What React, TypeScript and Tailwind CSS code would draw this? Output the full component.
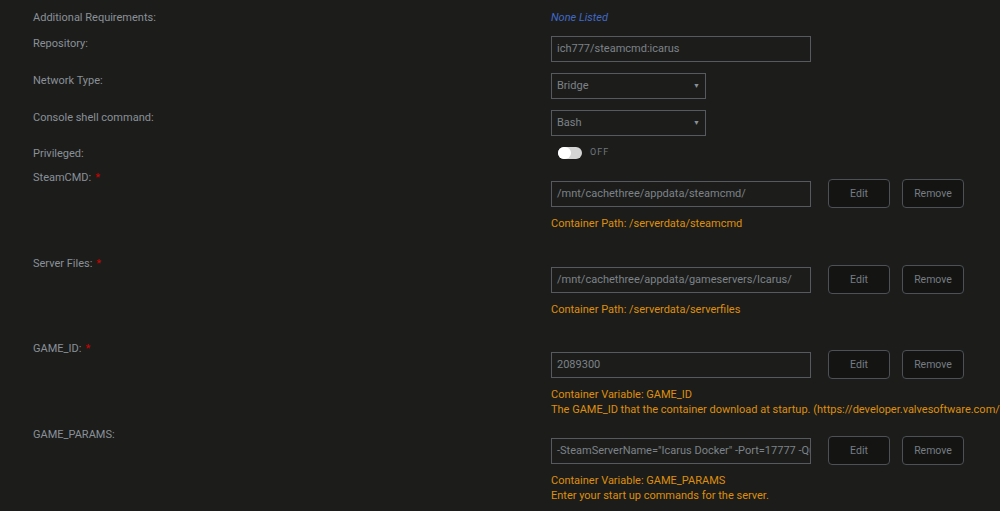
import { ReactNode } from "react"

const font = { fontFamily: "Roboto, 'Liberation Sans', sans-serif" }

function Label({ children, required }: { children: ReactNode; required?: boolean }) {
  return (
    <div className="w-[518px] shrink-0 pt-[1px] leading-[17px] text-[#8a9098]">
      {children}
      {required && <span className="ml-[4px] text-[#d10000]">*</span>}
    </div>
  )
}

function Input({ value }: { value: string }) {
  return (
    <div className="h-[26px] w-[260px] shrink-0 overflow-hidden whitespace-nowrap border border-[#555a5e] px-[5px] text-[11px] leading-[24px] text-[#7c8288]">
      {value}
    </div>
  )
}

function Select({ value }: { value: string }) {
  return (
    <div className="flex h-[26px] w-[155px] items-center justify-between border border-[#555a5e] pl-[5px] pr-[5px] text-[11px] text-[#7c8288]">
      <span>{value}</span>
      <span className="text-[7px] text-[#8a9098]">▼</span>
    </div>
  )
}

function Btn({ children }: { children: ReactNode }) {
  return (
    <button className="h-[29px] w-[62px] rounded-[4px] border border-[#4c5156] bg-[#141513] text-[10.5px] text-[#767c83]">
      {children}
    </button>
  )
}

type Block = { label: string; required?: boolean; value: string; lines: string[]; h: string }

const blocks: Block[] = [
  { label: "SteamCMD:", required: true, value: "/mnt/cachethree/appdata/steamcmd/", lines: ["Container Path: /serverdata/steamcmd"], h: "h-[86px]" },
  { label: "Server Files:", required: true, value: "/mnt/cachethree/appdata/gameservers/Icarus/", lines: ["Container Path: /serverdata/serverfiles"], h: "h-[85px]" },
  {
    label: "GAME_ID:",
    required: true,
    value: "2089300",
    lines: ["Container Variable: GAME_ID", "The GAME_ID that the container download at startup. (https://developer.valvesoftware.com/wiki/Dedicated_Servers_List)"],
    h: "h-[86px]",
  },
  {
    label: "GAME_PARAMS:",
    value: '-SteamServerName="Icarus Docker" -Port=17777 -QueryPort=27015',
    lines: ["Container Variable: GAME_PARAMS", "Enter your start up commands for the server."],
    h: "h-[86px]",
  },
]

export default function App() {
  return (
    <div className="h-[511px] w-[1000px] overflow-hidden bg-[#1c1d1b] pl-[33px] pt-[8px] text-[11px]" style={font}>
      <div className="flex">
        <Label>Additional Requirements:</Label>
        <div className="pt-[1px] leading-[17px] italic text-[#4169c8]">None Listed</div>
      </div>

      <div className="mt-[8px] flex">
        <Label>Repository:</Label>
        <div className="pt-[2px]">
          <Input value="ich777/steamcmd:icarus" />
        </div>
      </div>

      <div className="mt-[9px] flex">
        <Label>Network Type:</Label>
        <div className="pt-[2px]">
          <Select value="Bridge" />
        </div>
      </div>

      <div className="mt-[9px] flex">
        <Label>Console shell command:</Label>
        <div className="pt-[2px]">
          <Select value="Bash" />
        </div>
      </div>

      <div className="mt-[8px] flex">
        <Label>Privileged:</Label>
        <div className="flex items-center gap-[8px] pl-[7px]">
          <div className="flex h-[12px] w-[24px] items-center rounded-full bg-[#d4d4d4]">
            <div className="h-[12px] w-[13px] rounded-full bg-white" />
          </div>
          <span className="text-[9px] tracking-[1px] text-[#6f757b]">OFF</span>
        </div>
      </div>

      <div className="mt-[6px]">
        {blocks.map((b) => (
          <div key={b.label} className={`flex ${b.h}`}>
            <Label required={b.required}>{b.label}</Label>
            <div className="min-w-0 pt-[11px]">
              <div className="flex items-center">
                <Input value={b.value} />
                <div className="ml-[17px] flex gap-[12px]">
                  <Btn>Edit</Btn>
                  <Btn>Remove</Btn>
                </div>
              </div>
              <div className="mt-[8px] whitespace-nowrap leading-[15px] text-[#de8e0b]">
                {b.lines.map((l) => (
                  <div key={l}>{l}</div>
                ))}
              </div>
            </div>
          </div>
        ))}
      </div>
    </div>
  )
}
